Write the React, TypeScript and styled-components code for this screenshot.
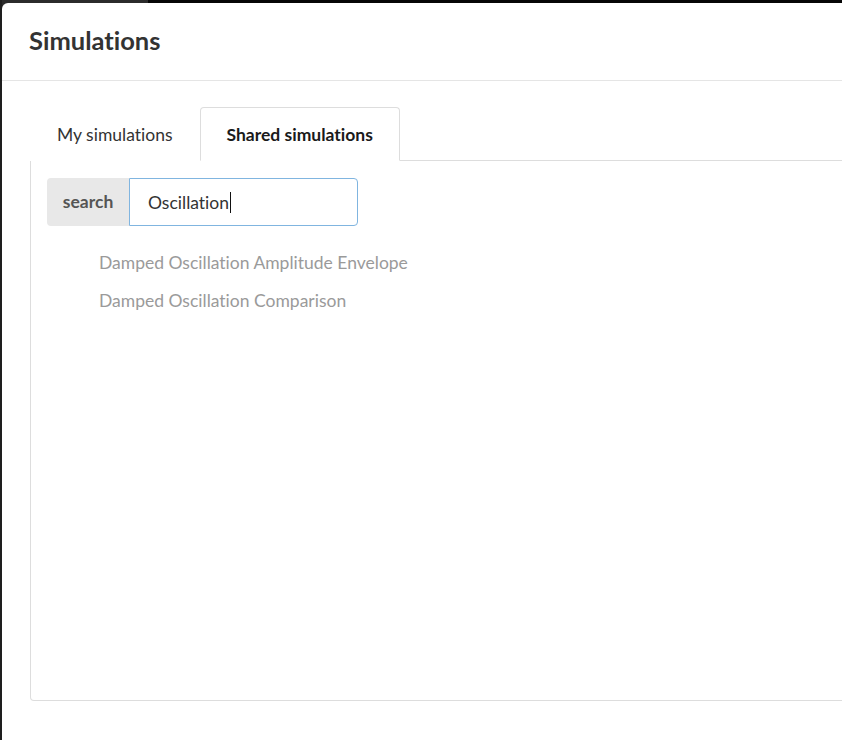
import React from "react";
import styled, { createGlobalStyle } from "styled-components";

const Global = createGlobalStyle`
  html, body { margin: 0; padding: 0; }
  body {
    width: 842px;
    height: 740px;
    overflow: hidden;
    background: linear-gradient(to right, #2b2b2b 0, #2b2b2b 148px, #060606 148px);
    font-family: Lato, "Open Sans", sans-serif;
    font-variant-ligatures: none;
  }
  #root { height: 100%; }
`;

const Backdrop = styled.div`
  height: 100%;
  padding: 3px 0 0 2px;
  box-sizing: border-box;
  background: linear-gradient(to right, #1e1e1e 0, #1e1e1e 2px, transparent 2px);
`;

const Modal = styled.div`
  width: 900px;
  height: 800px;
  background: #fff;
  border-radius: 6px 0 0 0;
  display: flex;
  flex-direction: column;
`;

const Header = styled.header`
  height: 78px;
  box-sizing: border-box;
  border-bottom: 1px solid #e5e5e5;
  display: flex;
  align-items: center;
  padding: 0 0 1px 27px;
`;

const Title = styled.h4`
  margin: 0;
  font-size: 25.5px;
  font-weight: 700;
  color: #333;
  line-height: 1;
`;

const Body = styled.div`
  padding: 26px 0 0 28px;
  display: flex;
  flex-direction: column;
`;

const TabList = styled.ul`
  list-style: none;
  margin: 0;
  padding: 0;
  display: flex;
  border-bottom: 1px solid #ddd;
  height: 53px;
`;

const Tab = styled.li<{ $active?: boolean }>`
  margin-bottom: -1px;
  padding: 0 26px;
  display: flex;
  align-items: center;
  font-size: 17.5px;
  color: ${(p) => (p.$active ? "#1a1a1a" : "#333")};
  font-weight: ${(p) => (p.$active ? 700 : 400)};
  background: #fff;
  border: 1px solid ${(p) => (p.$active ? "#ddd" : "transparent")};
  border-bottom-color: ${(p) => (p.$active ? "#fff" : "transparent")};
  border-radius: 4px 4px 0 0;
  cursor: pointer;
`;

const Panel = styled.div`
  height: 540px;
  border: 1px solid #ddd;
  border-top: none;
  border-radius: 0 0 0 4px;
  padding: 17px 0 0 16px;
  box-sizing: border-box;
`;

const InputGroup = styled.div`
  display: flex;
  width: 311px;
  height: 48px;
`;

const Addon = styled.span`
  width: 82px;
  display: flex;
  align-items: center;
  justify-content: center;
  background: #e8e8e8;
  border-radius: 4px 0 0 4px;
  color: #555;
  font-weight: 700;
  font-size: 17.5px;
  padding-bottom: 2px;
  box-sizing: border-box;
`;

const Field = styled.div`
  flex: 1;
  display: flex;
  align-items: center;
  border: 1px solid #80b5e0;
  border-radius: 0 4px 4px 0;
  padding: 0 0 0 18px;
  font-size: 17.5px;
  color: #333;
`;

const Caret = styled.span`
  display: inline-block;
  width: 1px;
  height: 21px;
  background: #111;
  margin-left: 1px;
  vertical-align: middle;
`;

const Results = styled.ul`
  list-style: none;
  margin: 18px 0 0 0;
  padding: 0 0 0 52px;
`;

const Result = styled.li`
  font-size: 17.5px;
  color: #9a9a9a;
  line-height: 38px;
  cursor: pointer;
`;

const results = [
  "Damped Oscillation Amplitude Envelope",
  "Damped Oscillation Comparison",
];

export default function App() {
  return (
    <>
      <Global />
      <Backdrop>
        <Modal>
          <Header>
            <Title>Simulations</Title>
          </Header>
          <Body>
            <TabList>
              <Tab>My simulations</Tab>
              <Tab $active>Shared simulations</Tab>
            </TabList>
            <Panel>
              <InputGroup>
                <Addon>search</Addon>
                <Field>
                  <span>Oscillation</span>
                  <Caret />
                </Field>
              </InputGroup>
              <Results>
                {results.map((r) => (
                  <Result key={r}>{r}</Result>
                ))}
              </Results>
            </Panel>
          </Body>
        </Modal>
      </Backdrop>
    </>
  );
}
